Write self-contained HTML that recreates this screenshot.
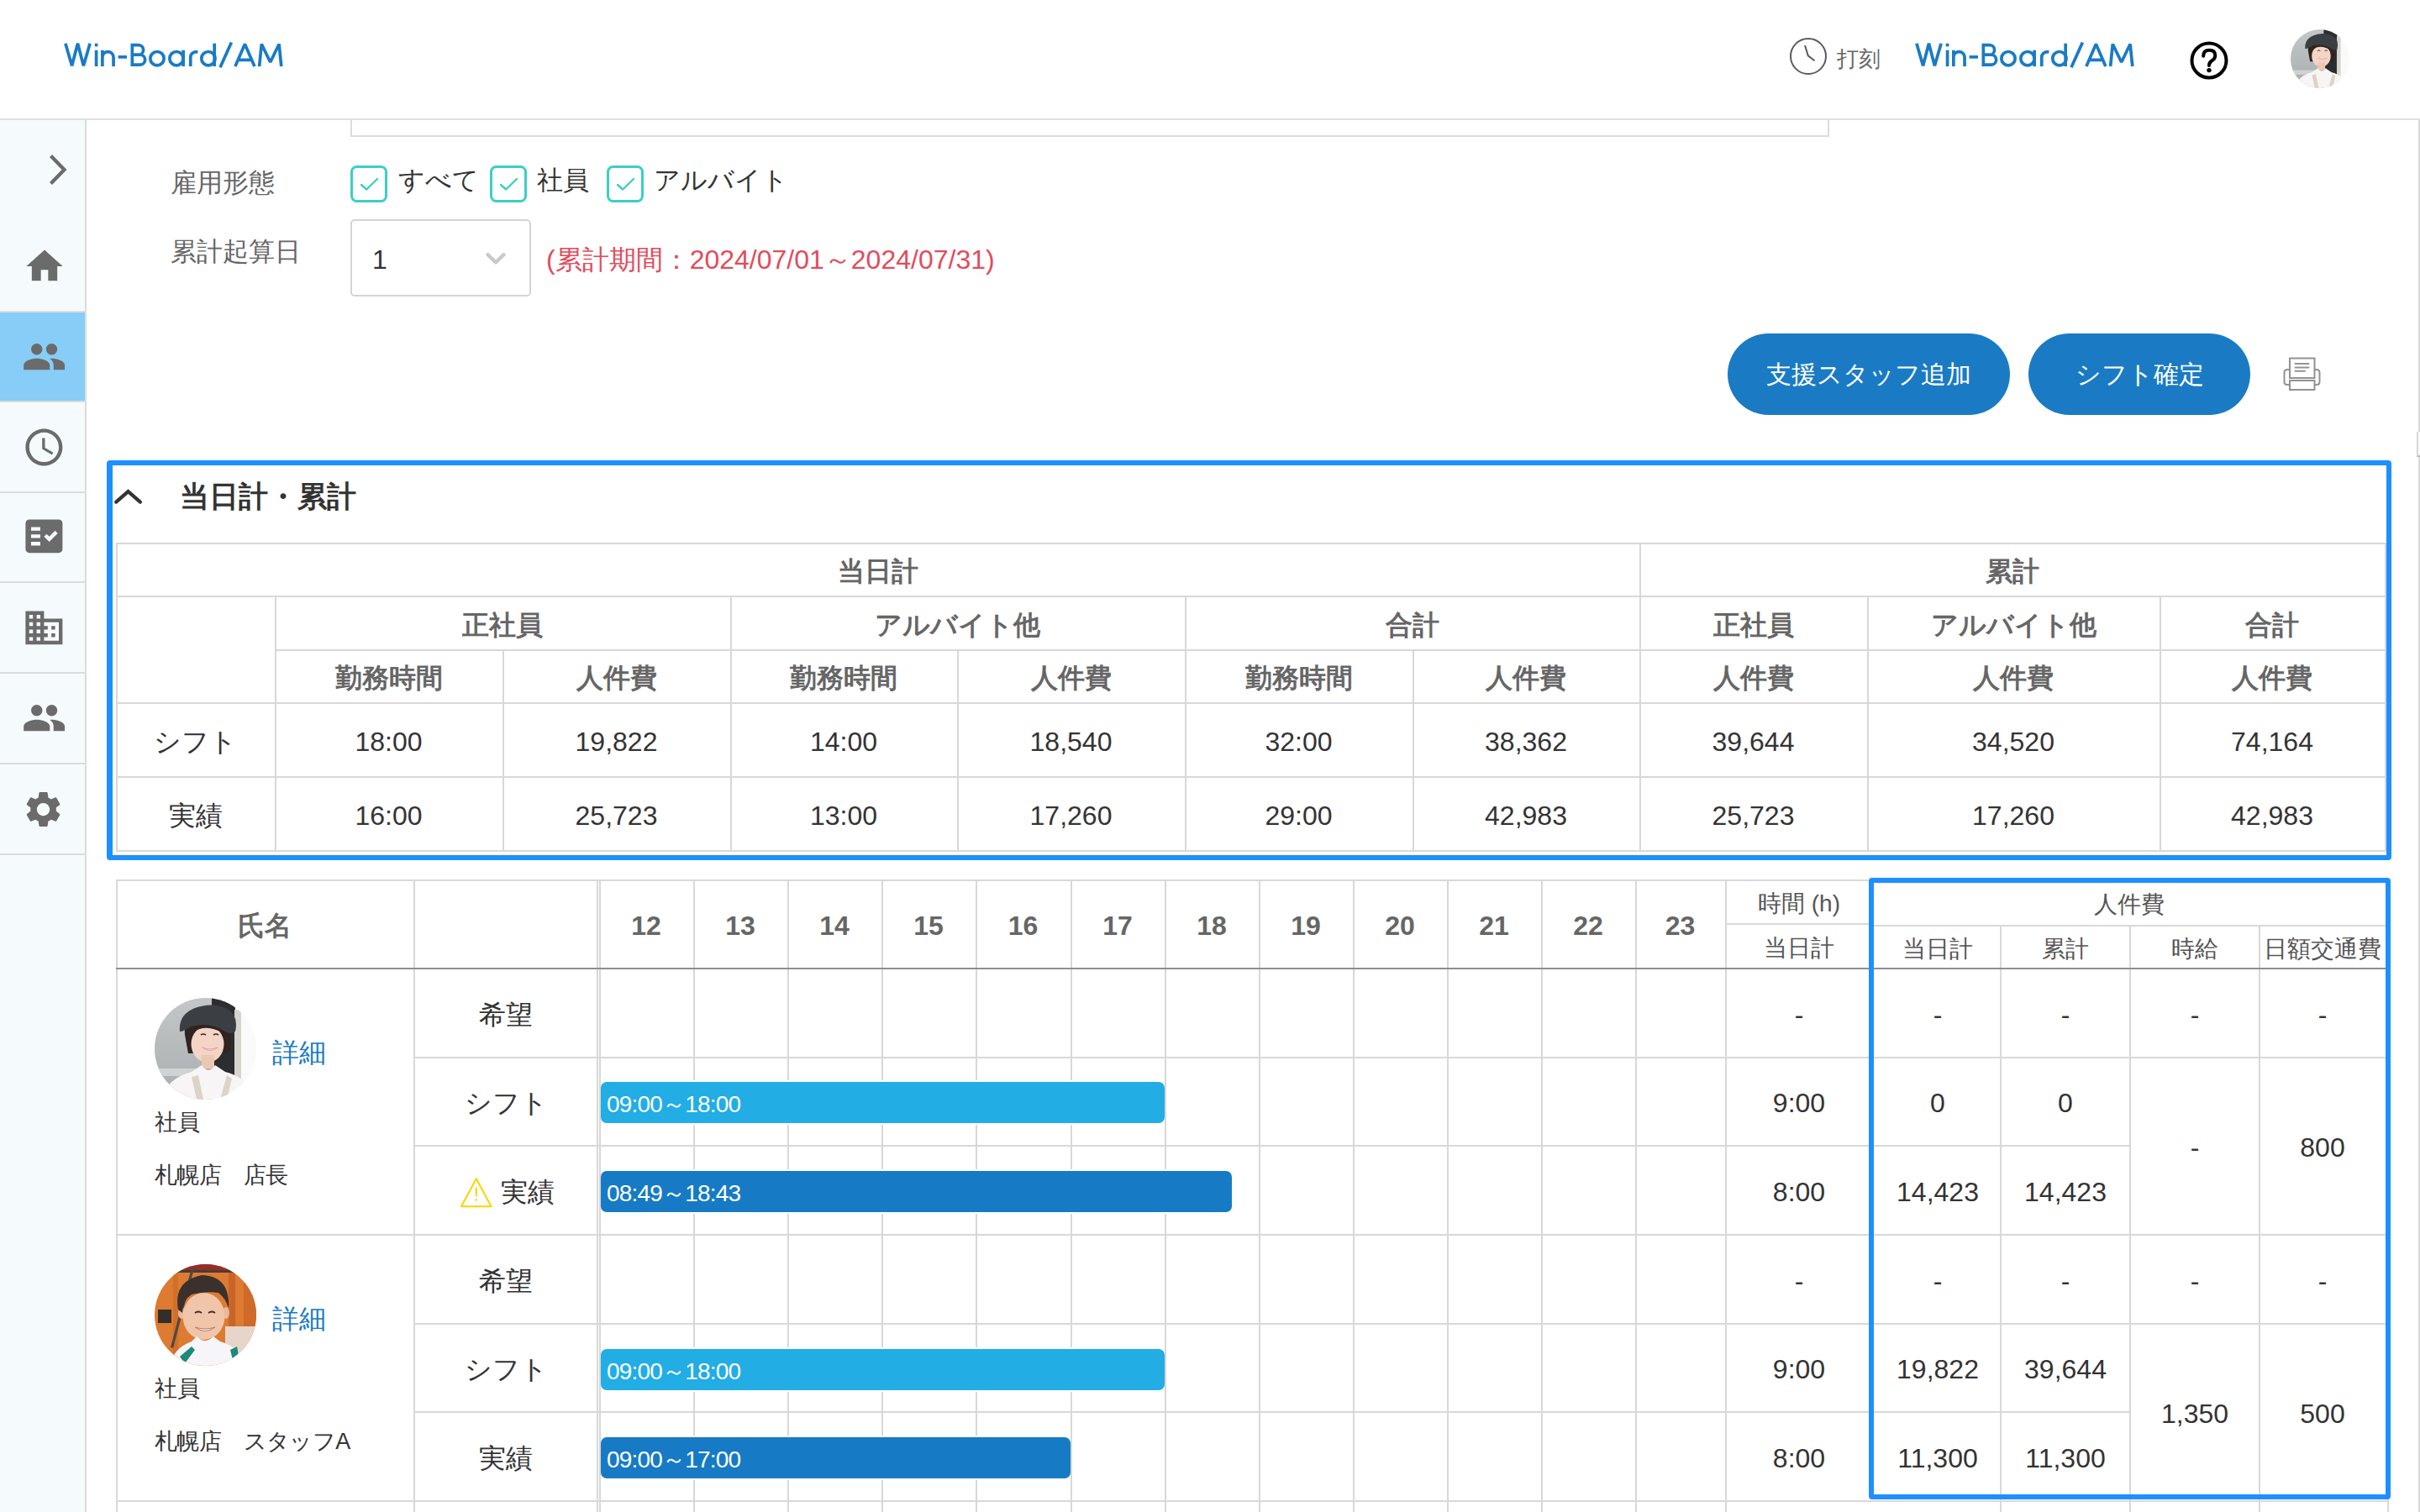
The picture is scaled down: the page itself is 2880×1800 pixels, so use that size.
<!DOCTYPE html><html><head><meta charset="utf-8"><style>
*{box-sizing:border-box;margin:0;padding:0}
html,body{width:2880px;height:1800px;overflow:hidden;background:#fff}
@media (max-width:2000px){html{zoom:0.5}}
body{position:relative;font-family:"Liberation Sans",sans-serif;color:#333;font-size:32px}
.l{position:absolute}
.a{position:absolute}
.c{position:absolute;display:flex;align-items:center;justify-content:center;white-space:nowrap;line-height:1;padding-top:5px}
.lt{position:absolute;display:flex;align-items:center;white-space:nowrap;line-height:1;padding-top:5px}
.hb{font-weight:bold;color:#666}
.g{color:#666}
.d{color:#333}
</style></head><body>
<div class="l" style="left:0px;top:141px;width:2880px;height:2px;background:#e0e0e0"></div>
<svg class="a" style="left:2128px;top:43px" width="48" height="48" viewBox="0 0 48 48"><circle cx="24" cy="24" r="21" fill="none" stroke="#5a5a5a" stroke-width="2"/><path d="M20 11 L23.8 23.3 L31.5 29.2" fill="none" stroke="#5a5a5a" stroke-width="2"/></svg>
<div class="lt" style="left:2186px;top:47px;height:40px;font-size:26px;color:#666">打刻</div>
<svg class="a" style="left:2604px;top:47px" width="50" height="50" viewBox="0 0 50 50"><circle cx="25" cy="25" r="20.5" fill="none" stroke="#000" stroke-width="4"/><path d="M18.2 19.8 Q18.2 12.8 25.2 12.8 Q32.3 12.8 32.3 19 Q32.3 23 28 25.5 Q25 27.5 25 31" fill="none" stroke="#000" stroke-width="4" stroke-linecap="round"/><circle cx="25" cy="36.6" r="2.7" fill="#000"/></svg>
<svg class="a" style="left:2726px;top:35px" width="70" height="70" viewBox="0 0 121 121"><defs><clipPath id="cw2726"><circle cx="60.5" cy="60.5" r="60.5"/></clipPath><linearGradient id="gw2726" x1="0" y1="0" x2="0" y2="1"><stop offset="0" stop-color="#c3c7c8"/><stop offset="1" stop-color="#a8adaf"/></linearGradient></defs><g clip-path="url(#cw2726)">
<rect width="121" height="121" fill="#fafafa"/>
<rect x="0" y="0" width="69" height="121" fill="url(#gw2726)"/>
<rect x="0" y="84" width="60" height="9" fill="#cfd3d4"/>
<rect x="68" y="0" width="28" height="96" fill="#2b2d30"/>
<rect x="95" y="14" width="8" height="84" fill="#d5d5cc"/>
<path d="M36 44 Q34 26 50 22 L84 24 Q94 36 90 62 L86 66 L40 66 Z" fill="#2f241f"/>
<ellipse cx="63" cy="55" rx="19.5" ry="22" fill="#f4d4c4"/>
<rect x="56" y="68" width="15" height="16" fill="#ecc7b3"/>
<path d="M48 40 Q62 30 86 44 L86 32 L48 32Z" fill="#2f241f"/>
<path d="M30 40 Q28 20 48 12 Q70 4 88 14 Q100 22 96 40 Q90 44 84 40 Q66 28 44 34 Q34 40 30 40Z" fill="#3b3e43"/>
<path d="M55 44 q3 -2 6 0 M70 44 q3 -2 6 0" stroke="#3a2a22" stroke-width="1.6" fill="none"/>
<path d="M57 59 Q66 66 75 59 Q66 63 57 59Z" fill="#fff" stroke="#d9a0a0" stroke-width="1"/>
<path d="M8 121 Q14 96 44 88 L56 80 Q64 92 72 80 L84 88 Q114 96 120 121Z" fill="#f7f5f6"/>
<path d="M44 94 L50 121 L58 121 L52 92Z M86 92 L78 121 L86 121 L92 96Z" fill="#ddd3c6"/>
</g></svg>
<svg class="a" style="left:76px;top:50px" width="265" height="34" viewBox="0 0 265 34"><g fill="none" stroke="#1a7bc4" stroke-width="3.7" stroke-linejoin="bevel">
<path d="M1.9 1.7 L9.6 28.2 L16.5 1.7 L23.4 28.2 L31.1 1.7"/>
<path d="M38.6 9.7 V29"/>
<path d="M45.85 9.7 V29 M45.85 18.2 A6.6 6.6 0 0 1 59.05 18.2 V29"/>
<path d="M64.6 17.85 H75"/>
<path d="M81.35 1.7 V29 M79.5 3.55 H89 A5.83 5.83 0 0 1 89 15.2 H81.35 M81.35 15.2 H90.9 A5.98 5.98 0 0 1 90.9 27.15 H79.5"/>
<circle cx="111" cy="19.65" r="8.15"/>
<circle cx="134" cy="19.65" r="8.15"/>
<path d="M142.15 9.7 V29"/>
<path d="M150.75 29 V18.5 Q150.75 11.55 159.4 11.55"/>
<circle cx="171.9" cy="19.65" r="8.15"/>
<path d="M179.15 1.7 V29"/>
<path d="M186 30.2 L199.4 0.5"/>
<path d="M203.9 29 L215.4 2.5 L226.9 29 M207.6 21.3 H223.2"/>
<path d="M232.6 29 L235.3 2.5 L245.7 24 L256.1 2.5 L258.8 29"/>
</g><rect x="36.75" y="1.7" width="3.7" height="3.7" fill="#1a7bc4"/></svg>
<svg class="a" style="left:2279px;top:50px" width="265" height="34" viewBox="0 0 265 34"><g fill="none" stroke="#1a7bc4" stroke-width="3.7" stroke-linejoin="bevel">
<path d="M1.9 1.7 L9.6 28.2 L16.5 1.7 L23.4 28.2 L31.1 1.7"/>
<path d="M38.6 9.7 V29"/>
<path d="M45.85 9.7 V29 M45.85 18.2 A6.6 6.6 0 0 1 59.05 18.2 V29"/>
<path d="M64.6 17.85 H75"/>
<path d="M81.35 1.7 V29 M79.5 3.55 H89 A5.83 5.83 0 0 1 89 15.2 H81.35 M81.35 15.2 H90.9 A5.98 5.98 0 0 1 90.9 27.15 H79.5"/>
<circle cx="111" cy="19.65" r="8.15"/>
<circle cx="134" cy="19.65" r="8.15"/>
<path d="M142.15 9.7 V29"/>
<path d="M150.75 29 V18.5 Q150.75 11.55 159.4 11.55"/>
<circle cx="171.9" cy="19.65" r="8.15"/>
<path d="M179.15 1.7 V29"/>
<path d="M186 30.2 L199.4 0.5"/>
<path d="M203.9 29 L215.4 2.5 L226.9 29 M207.6 21.3 H223.2"/>
<path d="M232.6 29 L235.3 2.5 L245.7 24 L256.1 2.5 L258.8 29"/>
</g><rect x="36.75" y="1.7" width="3.7" height="3.7" fill="#1a7bc4"/></svg>
<div class="a" style="left:0;top:143px;width:101px;height:1657px;background:#f5fbfd"></div>
<div class="l" style="left:101px;top:143px;width:2px;height:1657px;background:#dcdcdc"></div>
<div class="a" style="left:0;top:372px;width:101px;height:105px;background:#87cdf7"></div>
<div class="l" style="left:0px;top:370px;width:101px;height:2px;background:#dcdcdc"></div>
<div class="l" style="left:0px;top:477px;width:101px;height:2px;background:#dcdcdc"></div>
<div class="l" style="left:0px;top:585px;width:101px;height:2px;background:#dcdcdc"></div>
<div class="l" style="left:0px;top:692px;width:101px;height:2px;background:#dcdcdc"></div>
<div class="l" style="left:0px;top:800px;width:101px;height:2px;background:#dcdcdc"></div>
<div class="l" style="left:0px;top:908px;width:101px;height:2px;background:#dcdcdc"></div>
<div class="l" style="left:0px;top:1016px;width:101px;height:2px;background:#dcdcdc"></div>
<svg class="a" style="left:50px;top:176px" width="40" height="52" viewBox="0 0 40 52"><path d="M10.5 9.5 L26.5 26 L10.5 42.5" fill="none" stroke="#6b6b6b" stroke-width="4.3"/></svg>
<svg class="a" style="left:26.7px;top:290.5px" width="52" height="52" viewBox="0 0 24 24"><path d="M10 20v-6h4v6h5v-8h3L12 3 2 12h3v8z" fill="#6b6b6b"/></svg>
<svg class="a" style="left:25.8px;top:398px" width="53.3" height="53.3" viewBox="0 0 24 24"><path d="M16 11c1.66 0 2.99-1.34 2.99-3S17.66 5 16 5c-1.66 0-3 1.34-3 3s1.34 3 3 3zm-8 0c1.66 0 2.99-1.34 2.99-3S9.66 5 8 5C6.34 5 5 6.34 5 8s1.34 3 3 3zm0 2c-2.33 0-7 1.17-7 3.5V19h14v-2.5c0-2.33-4.67-3.5-7-3.5zm8 0c-.29 0-.62.02-.97.05 1.16.84 1.97 1.97 1.97 3.45V19h6v-2.5c0-2.33-4.67-3.5-7-3.5z" fill="#6b6b6b"/></svg>
<svg class="a" style="left:25.8px;top:505.6px" width="52.8" height="52.8" viewBox="0 0 24 24"><path d="M11.99 2C6.47 2 2 6.48 2 12s4.47 10 9.99 10C17.52 22 22 17.52 22 12S17.52 2 11.99 2zM12 20c-4.42 0-8-3.58-8-8s3.58-8 8-8 8 3.58 8 8-3.58 8-8 8zm.5-13H11v6l5.25 3.15.75-1.23-4.5-2.67z" fill="#6b6b6b"/></svg>
<svg class="a" style="left:26.1px;top:612.4px" width="52.8" height="52.8" viewBox="0 0 24 24"><path d="M20 3H4c-1.1 0-2 .9-2 2v14c0 1.1.9 2 2 2h16c1.1 0 2-.9 2-2V5c0-1.1-.9-2-2-2zM10 17H5v-2h5v2zm0-4H5v-2h5v2zm0-4H5V7h5v2zm4.82 6L12 12.16l1.41-1.41 1.41 1.42L17.99 9l1.42 1.42L14.82 15z" fill="#6b6b6b"/></svg>
<svg class="a" style="left:26.1px;top:721.1px" width="52.8" height="52.8" viewBox="0 0 24 24"><path d="M12 7V3H2v18h20V7H12zM6 19H4v-2h2v2zm0-4H4v-2h2v2zm0-4H4V9h2v2zm0-4H4V5h2v2zm4 12H8v-2h2v2zm0-4H8v-2h2v2zm0-4H8V9h2v2zm0-4H8V5h2v2zm10 12h-8v-2h2v-2h-2v-2h2v-2h-2V9h8v10zm-2-8h-2v2h2v-2zm0 4h-2v2h2v-2z" fill="#6b6b6b"/></svg>
<svg class="a" style="left:25.8px;top:828.4px" width="53.3" height="53.3" viewBox="0 0 24 24"><path d="M16 11c1.66 0 2.99-1.34 2.99-3S17.66 5 16 5c-1.66 0-3 1.34-3 3s1.34 3 3 3zm-8 0c1.66 0 2.99-1.34 2.99-3S9.66 5 8 5C6.34 5 5 6.34 5 8s1.34 3 3 3zm0 2c-2.33 0-7 1.17-7 3.5V19h14v-2.5c0-2.33-4.67-3.5-7-3.5zm8 0c-.29 0-.62.02-.97.05 1.16.84 1.97 1.97 1.97 3.45V19h6v-2.5c0-2.33-4.67-3.5-7-3.5z" fill="#6b6b6b"/></svg>
<svg class="a" style="left:26.2px;top:937.6px" width="51.1" height="51.1" viewBox="0 0 24 24"><path d="M19.14 12.94c.04-.3.06-.61.06-.94 0-.32-.02-.64-.07-.94l2.03-1.58c.18-.14.23-.41.12-.61l-1.92-3.32c-.12-.22-.37-.29-.59-.22l-2.39.96c-.5-.38-1.03-.7-1.62-.94l-.36-2.54c-.04-.24-.24-.41-.48-.41h-3.84c-.24 0-.43.17-.47.41l-.36 2.54c-.59.24-1.13.57-1.62.94l-2.39-.96c-.22-.08-.47 0-.59.22L2.74 8.87c-.12.21-.08.47.12.61l2.03 1.58c-.05.3-.09.63-.09.94s.02.64.07.94l-2.03 1.58c-.18.14-.23.41-.12.61l1.92 3.32c.12.22.37.29.59.22l2.39-.96c.5.38 1.03.7 1.62.94l.36 2.54c.05.24.24.41.48.41h3.84c.24 0 .44-.17.47-.41l.36-2.54c.59-.24 1.13-.56 1.62-.94l2.39.96c.22.08.47 0 .59-.22l1.92-3.32c.12-.22.07-.47-.12-.61l-2.01-1.58zM12 15.6c-1.98 0-3.6-1.62-3.6-3.6s1.62-3.6 3.6-3.6 3.6 1.62 3.6 3.6-1.62 3.6-3.6 3.6z" fill="#6b6b6b"/></svg>
<div class="l" style="left:2878px;top:143px;width:2px;height:1657px;background:#dadada"></div>
<div class="a" style="left:2876px;top:514px;width:4px;height:30px;background:#fff;border-left:2px solid #d6d6d6;border-bottom:2px solid #bbb"></div>
<div class="a" style="left:417px;top:143px;width:1760px;height:20px;border:2px solid #dcdcdc;border-top:none"></div>
<div class="lt g" style="left:203px;top:193px;height:44px;font-size:31px">雇用形態</div>
<svg class="a" style="left:417px;top:197px" width="46" height="46" viewBox="0 0 46 46"><rect x="1.5" y="1.5" width="41" height="41" rx="6" fill="#fff" stroke="#3ccfc4" stroke-width="3"/><path d="M13 23 L19.2 28.5 L32 16" fill="none" stroke="#3ccfc4" stroke-width="2.4" stroke-linecap="round" stroke-linejoin="round"/></svg>
<div class="lt d" style="left:474px;top:190px;height:44px;font-size:31px">すべて</div>
<svg class="a" style="left:583px;top:197px" width="46" height="46" viewBox="0 0 46 46"><rect x="1.5" y="1.5" width="41" height="41" rx="6" fill="#fff" stroke="#3ccfc4" stroke-width="3"/><path d="M13 23 L19.2 28.5 L32 16" fill="none" stroke="#3ccfc4" stroke-width="2.4" stroke-linecap="round" stroke-linejoin="round"/></svg>
<div class="lt d" style="left:639px;top:190px;height:44px;font-size:31px">社員</div>
<svg class="a" style="left:722px;top:197px" width="46" height="46" viewBox="0 0 46 46"><rect x="1.5" y="1.5" width="41" height="41" rx="6" fill="#fff" stroke="#3ccfc4" stroke-width="3"/><path d="M13 23 L19.2 28.5 L32 16" fill="none" stroke="#3ccfc4" stroke-width="2.4" stroke-linecap="round" stroke-linejoin="round"/></svg>
<div class="lt d" style="left:778px;top:190px;height:44px;font-size:31px">アルバイト</div>
<div class="lt g" style="left:203px;top:275px;height:44px;font-size:31px">累計起算日</div>
<div class="a" style="left:417px;top:261px;width:215px;height:92px;border:2px solid #d4d4d4;border-radius:5px"></div>
<div class="lt d" style="left:443px;top:286px;height:40px;">1</div>
<svg class="a" style="left:574px;top:296px" width="32" height="24" viewBox="0 0 32 24"><path d="M6.5 7.2 L16 16.3 L25.5 7.2" fill="none" stroke="#cacaca" stroke-width="4.4" stroke-linecap="round" stroke-linejoin="round"/></svg>
<div class="lt " style="left:650px;top:286px;height:40px;color:#e24c5c">(累計期間：2024/07/01～2024/07/31)</div>
<div class="c" style="left:2056px;top:397px;width:336px;height:97px;background:#1a7bc4;border-radius:49px;color:#fff;font-size:30px;padding-top:1px">支援スタッフ追加</div>
<div class="c" style="left:2414px;top:397px;width:264px;height:97px;background:#1a7bc4;border-radius:49px;color:#fff;font-size:30px;padding-top:1px">シフト確定</div>
<svg class="a" style="left:2716px;top:424px" width="46" height="42" viewBox="0 0 46 42"><g fill="none" stroke="#929292" stroke-width="2"><rect x="9" y="2.5" width="29.5" height="23.5"/><rect x="9" y="29" width="29.5" height="11"/><path d="M9 16 H6 Q2.5 16 2.5 19.5 V30.5 Q2.5 34 6 34 H9 M38.5 16 H41 Q44.5 16 44.5 19.5 V30.5 Q44.5 34 41 34 H38.5"/><path d="M15.5 9 H31.5 M15.5 13.5 H31.5 M15.5 17.7 H27" stroke-linecap="round"/></g></svg>
<div class="a" style="left:127px;top:548px;width:2719px;height:476px;border:6px solid #1e8ffe;border-left-width:7px;border-radius:4px"></div>
<svg class="a" style="left:134px;top:578px" width="40" height="26" viewBox="0 0 40 26"><path d="M4.2 19.6 L18.5 7.1 L32.9 19.6" fill="none" stroke="#333" stroke-width="4.2" stroke-linecap="round"/></svg>
<div class="lt " style="left:214px;top:566px;height:44px;font-size:35px;font-weight:bold;color:#333">当日計・累計</div>
<div class="l" style="left:138px;top:646px;width:2702px;height:2px;background:#d8d8d8"></div>
<div class="l" style="left:138px;top:709px;width:2702px;height:2px;background:#d8d8d8"></div>
<div class="l" style="left:327px;top:773px;width:2513px;height:2px;background:#d8d8d8"></div>
<div class="l" style="left:138px;top:836px;width:2702px;height:2px;background:#d8d8d8"></div>
<div class="l" style="left:138px;top:924px;width:2702px;height:2px;background:#d8d8d8"></div>
<div class="l" style="left:138px;top:1012px;width:2702px;height:2px;background:#d8d8d8"></div>
<div class="l" style="left:138px;top:646px;width:2px;height:368px;background:#d8d8d8"></div>
<div class="l" style="left:2838px;top:646px;width:2px;height:368px;background:#d8d8d8"></div>
<div class="l" style="left:1951px;top:646px;width:2px;height:366px;background:#d8d8d8"></div>
<div class="l" style="left:327px;top:709px;width:2px;height:303px;background:#d8d8d8"></div>
<div class="l" style="left:869px;top:709px;width:2px;height:303px;background:#d8d8d8"></div>
<div class="l" style="left:1410px;top:709px;width:2px;height:303px;background:#d8d8d8"></div>
<div class="l" style="left:2222px;top:709px;width:2px;height:303px;background:#d8d8d8"></div>
<div class="l" style="left:2570px;top:709px;width:2px;height:303px;background:#d8d8d8"></div>
<div class="l" style="left:598px;top:773px;width:2px;height:239px;background:#d8d8d8"></div>
<div class="l" style="left:1139px;top:773px;width:2px;height:239px;background:#d8d8d8"></div>
<div class="l" style="left:1681px;top:773px;width:2px;height:239px;background:#d8d8d8"></div>
<div class="c hb" style="left:138px;top:646px;width:1813px;height:63px;">当日計</div>
<div class="c hb" style="left:1951px;top:646px;width:887px;height:63px;">累計</div>
<div class="c hb" style="left:327px;top:709px;width:542px;height:64px;">正社員</div>
<div class="c hb" style="left:869px;top:709px;width:541px;height:64px;">アルバイト他</div>
<div class="c hb" style="left:1410px;top:709px;width:541px;height:64px;">合計</div>
<div class="c hb" style="left:1951px;top:709px;width:271px;height:64px;">正社員</div>
<div class="c hb" style="left:2222px;top:709px;width:348px;height:64px;">アルバイト他</div>
<div class="c hb" style="left:2570px;top:709px;width:268px;height:64px;">合計</div>
<div class="c hb" style="left:327px;top:773px;width:271px;height:63px;">勤務時間</div>
<div class="c hb" style="left:598px;top:773px;width:271px;height:63px;">人件費</div>
<div class="c hb" style="left:869px;top:773px;width:270px;height:63px;">勤務時間</div>
<div class="c hb" style="left:1139px;top:773px;width:271px;height:63px;">人件費</div>
<div class="c hb" style="left:1410px;top:773px;width:271px;height:63px;">勤務時間</div>
<div class="c hb" style="left:1681px;top:773px;width:270px;height:63px;">人件費</div>
<div class="c hb" style="left:1951px;top:773px;width:271px;height:63px;">人件費</div>
<div class="c hb" style="left:2222px;top:773px;width:348px;height:63px;">人件費</div>
<div class="c hb" style="left:2570px;top:773px;width:268px;height:63px;">人件費</div>
<div class="c d" style="left:138px;top:836px;width:189px;height:88px;">シフト</div>
<div class="c d" style="left:327px;top:836px;width:271px;height:88px;">18:00</div>
<div class="c d" style="left:598px;top:836px;width:271px;height:88px;">19,822</div>
<div class="c d" style="left:869px;top:836px;width:270px;height:88px;">14:00</div>
<div class="c d" style="left:1139px;top:836px;width:271px;height:88px;">18,540</div>
<div class="c d" style="left:1410px;top:836px;width:271px;height:88px;">32:00</div>
<div class="c d" style="left:1681px;top:836px;width:270px;height:88px;">38,362</div>
<div class="c d" style="left:1951px;top:836px;width:271px;height:88px;">39,644</div>
<div class="c d" style="left:2222px;top:836px;width:348px;height:88px;">34,520</div>
<div class="c d" style="left:2570px;top:836px;width:268px;height:88px;">74,164</div>
<div class="c d" style="left:138px;top:924px;width:189px;height:88px;">実績</div>
<div class="c d" style="left:327px;top:924px;width:271px;height:88px;">16:00</div>
<div class="c d" style="left:598px;top:924px;width:271px;height:88px;">25,723</div>
<div class="c d" style="left:869px;top:924px;width:270px;height:88px;">13:00</div>
<div class="c d" style="left:1139px;top:924px;width:271px;height:88px;">17,260</div>
<div class="c d" style="left:1410px;top:924px;width:271px;height:88px;">29:00</div>
<div class="c d" style="left:1681px;top:924px;width:270px;height:88px;">42,983</div>
<div class="c d" style="left:1951px;top:924px;width:271px;height:88px;">25,723</div>
<div class="c d" style="left:2222px;top:924px;width:348px;height:88px;">17,260</div>
<div class="c d" style="left:2570px;top:924px;width:268px;height:88px;">42,983</div>
<div class="l" style="left:138px;top:1047px;width:2705px;height:2px;background:#d8d8d8"></div>
<div class="l" style="left:138px;top:1047px;width:2px;height:753px;background:#d8d8d8"></div>
<div class="l" style="left:492px;top:1047px;width:2px;height:753px;background:#d8d8d8"></div>
<div class="l" style="left:710px;top:1047px;width:2px;height:753px;background:#d8d8d8"></div>
<div class="l" style="left:713px;top:1047px;width:2px;height:753px;background:#d8d8d8"></div>
<div class="l" style="left:825px;top:1047px;width:2px;height:753px;background:#d8d8d8"></div>
<div class="l" style="left:937px;top:1047px;width:2px;height:753px;background:#d8d8d8"></div>
<div class="l" style="left:1049px;top:1047px;width:2px;height:753px;background:#d8d8d8"></div>
<div class="l" style="left:1161px;top:1047px;width:2px;height:753px;background:#d8d8d8"></div>
<div class="l" style="left:1274px;top:1047px;width:2px;height:753px;background:#d8d8d8"></div>
<div class="l" style="left:1386px;top:1047px;width:2px;height:753px;background:#d8d8d8"></div>
<div class="l" style="left:1498px;top:1047px;width:2px;height:753px;background:#d8d8d8"></div>
<div class="l" style="left:1610px;top:1047px;width:2px;height:753px;background:#d8d8d8"></div>
<div class="l" style="left:1722px;top:1047px;width:2px;height:753px;background:#d8d8d8"></div>
<div class="l" style="left:1834px;top:1047px;width:2px;height:753px;background:#d8d8d8"></div>
<div class="l" style="left:1946px;top:1047px;width:2px;height:753px;background:#d8d8d8"></div>
<div class="l" style="left:2053px;top:1047px;width:2px;height:753px;background:#d8d8d8"></div>
<div class="l" style="left:2380px;top:1101px;width:2px;height:699px;background:#d8d8d8"></div>
<div class="l" style="left:2534px;top:1101px;width:2px;height:699px;background:#d8d8d8"></div>
<div class="l" style="left:2688px;top:1101px;width:2px;height:699px;background:#d8d8d8"></div>
<div class="l" style="left:2841px;top:1047px;width:2px;height:753px;background:#d8d8d8"></div>
<div class="l" style="left:138px;top:1152px;width:2705px;height:2px;background:#8e8e8e"></div>
<div class="l" style="left:2053px;top:1099px;width:175px;height:2px;background:#d8d8d8"></div>
<div class="l" style="left:2228px;top:1101px;width:615px;height:2px;background:#d8d8d8"></div>
<div class="l" style="left:138px;top:1469px;width:2705px;height:2px;background:#d8d8d8"></div>
<div class="l" style="left:138px;top:1786px;width:2705px;height:2px;background:#d8d8d8"></div>
<div class="l" style="left:492px;top:1258px;width:2042px;height:2px;background:#d8d8d8"></div>
<div class="l" style="left:492px;top:1363px;width:2042px;height:2px;background:#d8d8d8"></div>
<div class="l" style="left:492px;top:1575px;width:2042px;height:2px;background:#d8d8d8"></div>
<div class="l" style="left:492px;top:1680px;width:2042px;height:2px;background:#d8d8d8"></div>
<div class="l" style="left:2534px;top:1258px;width:309px;height:2px;background:#d8d8d8"></div>
<div class="l" style="left:2534px;top:1575px;width:309px;height:2px;background:#d8d8d8"></div>
<div class="c hb" style="left:138px;top:1047px;width:354px;height:105px;">氏名</div>
<div class="c hb" style="left:713px;top:1047px;width:112px;height:105px;">12</div>
<div class="c hb" style="left:825px;top:1047px;width:112px;height:105px;">13</div>
<div class="c hb" style="left:937px;top:1047px;width:112px;height:105px;">14</div>
<div class="c hb" style="left:1049px;top:1047px;width:112px;height:105px;">15</div>
<div class="c hb" style="left:1161px;top:1047px;width:113px;height:105px;">16</div>
<div class="c hb" style="left:1274px;top:1047px;width:112px;height:105px;">17</div>
<div class="c hb" style="left:1386px;top:1047px;width:112px;height:105px;">18</div>
<div class="c hb" style="left:1498px;top:1047px;width:112px;height:105px;">19</div>
<div class="c hb" style="left:1610px;top:1047px;width:112px;height:105px;">20</div>
<div class="c hb" style="left:1722px;top:1047px;width:112px;height:105px;">21</div>
<div class="c hb" style="left:1834px;top:1047px;width:112px;height:105px;">22</div>
<div class="c hb" style="left:1946px;top:1047px;width:107px;height:105px;">23</div>
<div class="c " style="left:2054px;top:1047px;width:174px;height:53px;font-size:28px;color:#555">時間 (h)</div>
<div class="c " style="left:2054px;top:1100px;width:174px;height:52px;font-size:28px;color:#555">当日計</div>
<div class="c " style="left:2228px;top:1047px;width:611px;height:55px;font-size:28px;color:#555">人件費</div>
<div class="c " style="left:2231px;top:1102px;width:150px;height:50px;font-size:28px;color:#555">当日計</div>
<div class="c " style="left:2381px;top:1102px;width:154px;height:50px;font-size:28px;color:#555">累計</div>
<div class="c " style="left:2535px;top:1102px;width:154px;height:50px;font-size:28px;color:#555">時給</div>
<div class="c " style="left:2689px;top:1102px;width:150px;height:50px;font-size:28px;color:#555">日額交通費</div>
<svg class="a" style="left:184px;top:1188px" width="121" height="121" viewBox="0 0 121 121"><defs><clipPath id="cw184"><circle cx="60.5" cy="60.5" r="60.5"/></clipPath><linearGradient id="gw184" x1="0" y1="0" x2="0" y2="1"><stop offset="0" stop-color="#c3c7c8"/><stop offset="1" stop-color="#a8adaf"/></linearGradient></defs><g clip-path="url(#cw184)">
<rect width="121" height="121" fill="#fafafa"/>
<rect x="0" y="0" width="69" height="121" fill="url(#gw184)"/>
<rect x="0" y="84" width="60" height="9" fill="#cfd3d4"/>
<rect x="68" y="0" width="28" height="96" fill="#2b2d30"/>
<rect x="95" y="14" width="8" height="84" fill="#d5d5cc"/>
<path d="M36 44 Q34 26 50 22 L84 24 Q94 36 90 62 L86 66 L40 66 Z" fill="#2f241f"/>
<ellipse cx="63" cy="55" rx="19.5" ry="22" fill="#f4d4c4"/>
<rect x="56" y="68" width="15" height="16" fill="#ecc7b3"/>
<path d="M48 40 Q62 30 86 44 L86 32 L48 32Z" fill="#2f241f"/>
<path d="M30 40 Q28 20 48 12 Q70 4 88 14 Q100 22 96 40 Q90 44 84 40 Q66 28 44 34 Q34 40 30 40Z" fill="#3b3e43"/>
<path d="M55 44 q3 -2 6 0 M70 44 q3 -2 6 0" stroke="#3a2a22" stroke-width="1.6" fill="none"/>
<path d="M57 59 Q66 66 75 59 Q66 63 57 59Z" fill="#fff" stroke="#d9a0a0" stroke-width="1"/>
<path d="M8 121 Q14 96 44 88 L56 80 Q64 92 72 80 L84 88 Q114 96 120 121Z" fill="#f7f5f6"/>
<path d="M44 94 L50 121 L58 121 L52 92Z M86 92 L78 121 L86 121 L92 96Z" fill="#ddd3c6"/>
</g></svg>
<div class="lt " style="left:324px;top:1229px;height:42px;color:#1a7bc4">詳細</div>
<div class="lt d" style="left:184px;top:1313px;height:42px;font-size:27px">社員</div>
<div class="lt d" style="left:184px;top:1376px;height:42px;font-size:27px;letter-spacing:-0.6px">札幌店　店長</div>
<div class="c d" style="left:493px;top:1152px;width:218px;height:106px;">希望</div>
<div class="c d" style="left:493px;top:1258px;width:218px;height:105px;">シフト</div>
<svg class="a" style="left:546px;top:1400px" width="42" height="38" viewBox="0 0 42 38"><path d="M20.8 3.2 L38.6 36.2 H3 Z" fill="none" stroke="#f7d600" stroke-width="2" stroke-linejoin="round"/><path d="M20.8 14.2 V23.4" stroke="#f7d600" stroke-width="2" stroke-linecap="round"/><circle cx="20.8" cy="28.6" r="1.25" fill="#f7d600"/></svg>
<div class="lt d" style="left:596px;top:1363px;height:106px;">実績</div>
<div class="lt" style="left:715px;top:1288px;width:671px;height:49px;background:#22ade5;border-radius:7px;box-shadow:0 -2px 0 #fff,0 2px 0 #fff;color:#fff;font-size:28px;padding-left:7px;letter-spacing:-0.8px">09:00～18:00</div>
<div class="lt" style="left:715px;top:1394px;width:751px;height:49px;background:#167bc4;border-radius:7px;box-shadow:0 -2px 0 #fff,0 2px 0 #fff;color:#fff;font-size:28px;padding-left:7px;letter-spacing:-0.8px">08:49～18:43</div>
<div class="c d" style="left:2054px;top:1152px;width:174px;height:106px;">-</div>
<div class="c d" style="left:2231px;top:1152px;width:150px;height:106px;">-</div>
<div class="c d" style="left:2381px;top:1152px;width:154px;height:106px;">-</div>
<div class="c d" style="left:2054px;top:1258px;width:174px;height:105px;">9:00</div>
<div class="c d" style="left:2231px;top:1258px;width:150px;height:105px;">0</div>
<div class="c d" style="left:2381px;top:1258px;width:154px;height:105px;">0</div>
<div class="c d" style="left:2054px;top:1363px;width:174px;height:106px;">8:00</div>
<div class="c d" style="left:2231px;top:1363px;width:150px;height:106px;">14,423</div>
<div class="c d" style="left:2381px;top:1363px;width:154px;height:106px;">14,423</div>
<div class="c d" style="left:2535px;top:1152px;width:154px;height:106px;">-</div>
<div class="c d" style="left:2689px;top:1152px;width:150px;height:106px;">-</div>
<div class="c d" style="left:2535px;top:1258px;width:154px;height:211px;">-</div>
<div class="c d" style="left:2689px;top:1258px;width:150px;height:211px;">800</div>
<svg class="a" style="left:184px;top:1505px" width="121" height="121" viewBox="0 0 121 121"><defs><clipPath id="cm184"><circle cx="60.5" cy="60.5" r="60.5"/></clipPath></defs><g clip-path="url(#cm184)">
<rect width="121" height="121" fill="#dc7b31"/>
<rect x="0" y="0" width="121" height="7" fill="#922f2b"/>
<rect x="0" y="7" width="121" height="3" fill="#4a3c36"/>
<rect x="22" y="10" width="6" height="111" fill="#d27028"/>
<rect x="88" y="10" width="8" height="64" fill="#c9642a"/>
<rect x="106" y="10" width="15" height="64" fill="#cf6a2b"/>
<path d="M84 74 L121 74 L121 121 L84 121Z" fill="#e7d5ca"/>
<path d="M44 4 L47 5 L22 100 L19 99Z" fill="#4f4844"/>
<rect x="4" y="54" width="16" height="16" fill="#332d2b"/>
<ellipse cx="32" cy="58" rx="4" ry="7" fill="#e8b899"/>
<ellipse cx="85" cy="58" rx="4" ry="7" fill="#e8b899"/>
<ellipse cx="58.5" cy="62" rx="25" ry="28" fill="#f0c5a9"/>
<path d="M28 54 Q22 20 56 13 Q90 14 88 52 Q84 40 76 34 Q60 32 44 36 Q34 42 33 58Z" fill="#3b312c"/>
<path d="M48 58 q4 -3 8 0 M64 58 q4 -3 8 0" stroke="#3a2a22" stroke-width="1.8" fill="none"/>
<path d="M48 75 Q60 84 72 75 Q60 79 48 75Z" fill="#f6f0dc" stroke="#b97a66" stroke-width="1"/>
<path d="M18 121 Q22 100 44 92 L50 86 Q60 96 70 86 L78 92 Q104 100 110 121Z" fill="#f6f5f9"/>
<path d="M30 110 L44 98 L48 102 L36 118Z M90 102 L98 98 L102 118 L94 118Z" fill="#1c8a78"/>
</g></svg>
<div class="lt " style="left:324px;top:1546px;height:42px;color:#1a7bc4">詳細</div>
<div class="lt d" style="left:184px;top:1630px;height:42px;font-size:27px">社員</div>
<div class="lt d" style="left:184px;top:1693px;height:42px;font-size:27px;letter-spacing:-0.6px">札幌店　スタッフA</div>
<div class="c d" style="left:493px;top:1469px;width:218px;height:106px;">希望</div>
<div class="c d" style="left:493px;top:1575px;width:218px;height:105px;">シフト</div>
<div class="c d" style="left:493px;top:1680px;width:218px;height:106px;">実績</div>
<div class="lt" style="left:715px;top:1606px;width:671px;height:49px;background:#22ade5;border-radius:7px;box-shadow:0 -2px 0 #fff,0 2px 0 #fff;color:#fff;font-size:28px;padding-left:7px;letter-spacing:-0.8px">09:00～18:00</div>
<div class="lt" style="left:715px;top:1711px;width:559px;height:49px;background:#167bc4;border-radius:7px;box-shadow:0 -2px 0 #fff,0 2px 0 #fff;color:#fff;font-size:28px;padding-left:7px;letter-spacing:-0.8px">09:00～17:00</div>
<div class="c d" style="left:2054px;top:1469px;width:174px;height:106px;">-</div>
<div class="c d" style="left:2231px;top:1469px;width:150px;height:106px;">-</div>
<div class="c d" style="left:2381px;top:1469px;width:154px;height:106px;">-</div>
<div class="c d" style="left:2054px;top:1575px;width:174px;height:105px;">9:00</div>
<div class="c d" style="left:2231px;top:1575px;width:150px;height:105px;">19,822</div>
<div class="c d" style="left:2381px;top:1575px;width:154px;height:105px;">39,644</div>
<div class="c d" style="left:2054px;top:1680px;width:174px;height:106px;">8:00</div>
<div class="c d" style="left:2231px;top:1680px;width:150px;height:106px;">11,300</div>
<div class="c d" style="left:2381px;top:1680px;width:154px;height:106px;">11,300</div>
<div class="c d" style="left:2535px;top:1469px;width:154px;height:106px;">-</div>
<div class="c d" style="left:2689px;top:1469px;width:150px;height:106px;">-</div>
<div class="c d" style="left:2535px;top:1575px;width:154px;height:211px;">1,350</div>
<div class="c d" style="left:2689px;top:1575px;width:150px;height:211px;">500</div>
<div class="a" style="left:2224px;top:1045px;width:621px;height:740px;border:6px solid #1e8ffe;border-radius:4px"></div>
</body></html>
